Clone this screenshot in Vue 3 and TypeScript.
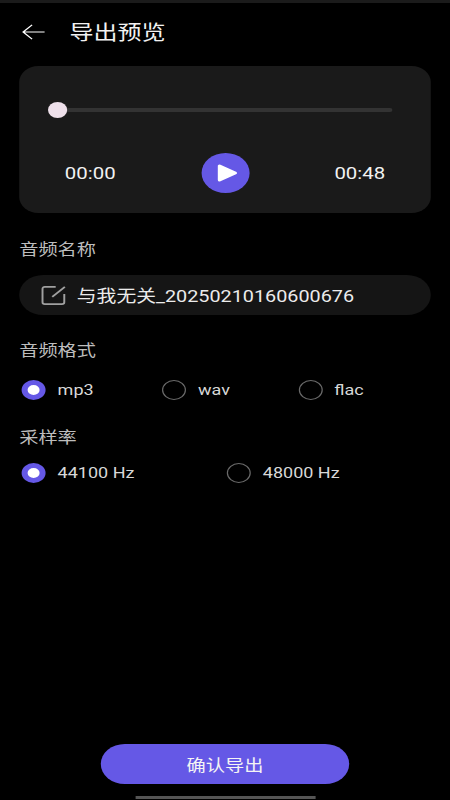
<script setup lang="ts">
import { ref } from 'vue';

const formats = ['mp3', 'wav', 'flac'];
const rates = ['44100 Hz', '48000 Hz'];

const format = ref('mp3');
const rate = ref('44100 Hz');
</script>

<template>
  <div class="page">
    <header class="topbar">
      <svg class="topbar__back" viewBox="0 0 24 20" fill="none" aria-hidden="true">
        <path d="M23 10H1.5M10.5 1.5L1.5 10l9 8.5" stroke="#fff" stroke-width="1.4" />
      </svg>
      <h1 class="topbar__title">导出预览</h1>
    </header>

    <section class="player">
      <div class="player__track">
        <span class="player__thumb" />
      </div>
      <div class="player__controls">
        <span>00:00</span>
        <button class="player__play" type="button" aria-label="播放">
          <svg viewBox="0 0 24 24" aria-hidden="true">
            <path d="M7 5v14l13-7z" fill="#fff" stroke="#fff" stroke-width="3" stroke-linejoin="round" />
          </svg>
        </button>
        <span>00:48</span>
      </div>
    </section>

    <p class="label label--name">音频名称</p>
    <div class="name-field">
      <svg class="name-field__icon" viewBox="0 0 22 22" fill="none" aria-hidden="true">
        <path d="M13 2.5H3.5a2 2 0 0 0-2 2v14a2 2 0 0 0 2 2h15a2 2 0 0 0 2-2V10" stroke="#a0a0a0" stroke-width="1.7" />
        <path d="M10 13L21 2.5" stroke="#a0a0a0" stroke-width="1.7" />
      </svg>
      <span>与我无关_20250210160600676</span>
    </div>

    <p class="label label--format">音频格式</p>
    <div class="options options--format">
      <label v-for="item in formats" :key="item" class="option" @click="format = item">
        <span class="radio" :class="{ 'radio--on': format === item }" />
        <span>{{ item }}</span>
      </label>
    </div>

    <p class="label label--rate">采样率</p>
    <div class="options options--rate">
      <label v-for="item in rates" :key="item" class="option" @click="rate = item">
        <span class="radio" :class="{ 'radio--on': rate === item }" />
        <span>{{ item }}</span>
      </label>
    </div>

    <button class="confirm" type="button">确认导出</button>
    <div class="home-bar" />
  </div>
</template>

<style>
html,
body {
  margin: 0;
  background: #000;
  overflow: hidden;
}
</style>

<style scoped>
/* the reference is a 375px wide layout stretched to 450px */
.page {
  width: 375px;
  height: 800px;
  transform: scaleX(1.2);
  transform-origin: left top;
  display: flex;
  flex-direction: column;
  box-sizing: border-box;
  border-top: 3px solid #1b1b1b;
  background: #000;
  color: #e6e6e6;
  font-family: Roboto, "Noto Sans CJK SC", sans-serif;
  font-size: 15px;
}

.topbar {
  display: flex;
  align-items: center;
  height: 20px;
  margin-top: 19px;
  padding-left: 18px;
}

.topbar__back {
  width: 20px;
  height: 20px;
}

.topbar__title {
  margin: 2px 0 0 20px;
  font-size: 20px;
  font-weight: 400;
  line-height: 20px;
  color: #f2f2f2;
}

.player {
  margin: 24px 16px 0;
  height: 147px;
  border-radius: 16px;
  background: #1a1a1a;
  padding: 36px 32px 0 24px;
  box-sizing: border-box;
}

.player__track {
  position: relative;
  height: 4px;
  margin-top: 6px;
  border-radius: 2px;
  background: #333;
}

.player__thumb {
  position: absolute;
  left: 0;
  top: -6px;
  width: 16px;
  height: 16px;
  border-radius: 50%;
  background: #eee0ea;
}

.player__controls {
  display: flex;
  align-items: center;
  justify-content: space-between;
  margin: 41px 6px 0 14px;
  font-size: 17px;
  color: #f2f2f2;
}

.player__play {
  width: 40px;
  height: 40px;
  padding: 8px;
  border: 0;
  border-radius: 50%;
  background: #6558e6;
}

.player__play svg {
  display: block;
  width: 24px;
  height: 24px;
}

.label {
  margin: 0;
  padding-left: 16px;
  font-size: 16px;
  line-height: 22px;
  color: #bdbdbd;
}

.label--name {
  margin-top: 26px;
}

.label--format {
  margin-top: 25px;
}

.label--rate {
  margin-top: 27px;
}

.name-field {
  display: flex;
  align-items: center;
  gap: 9px;
  margin: 14px 16px 0;
  height: 40px;
  padding-left: 18px;
  border-radius: 20px;
  background: #151515;
  font-size: 16.5px;
  color: #ececec;
}

.name-field__icon {
  width: 21px;
  height: 22px;
}

.options {
  display: flex;
  padding-left: 18px;
  margin-top: 18px;
}

.options--format {
  gap: 57px;
}

.options--rate {
  gap: 77px;
  margin-top: 14px;
}

.option {
  display: flex;
  align-items: center;
  gap: 10px;
  height: 20px;
  color: #d8d8d8;
}

.radio {
  width: 20px;
  height: 20px;
  box-sizing: border-box;
  border: 1px solid #6a6a6a;
  border-radius: 50%;
}

.radio--on {
  border: 5px solid #6558e6;
  background: #fff;
}

.confirm {
  align-self: center;
  margin-top: auto;
  width: 207px;
  height: 40px;
  border: 0;
  border-radius: 20px;
  background: #6558e6;
  color: #f4f4f4;
  font-family: inherit;
  font-size: 16px;
}

.home-bar {
  align-self: center;
  width: 150px;
  height: 3px;
  margin-top: 12px;
  margin-bottom: 1px;
  background: #555;
}
</style>
